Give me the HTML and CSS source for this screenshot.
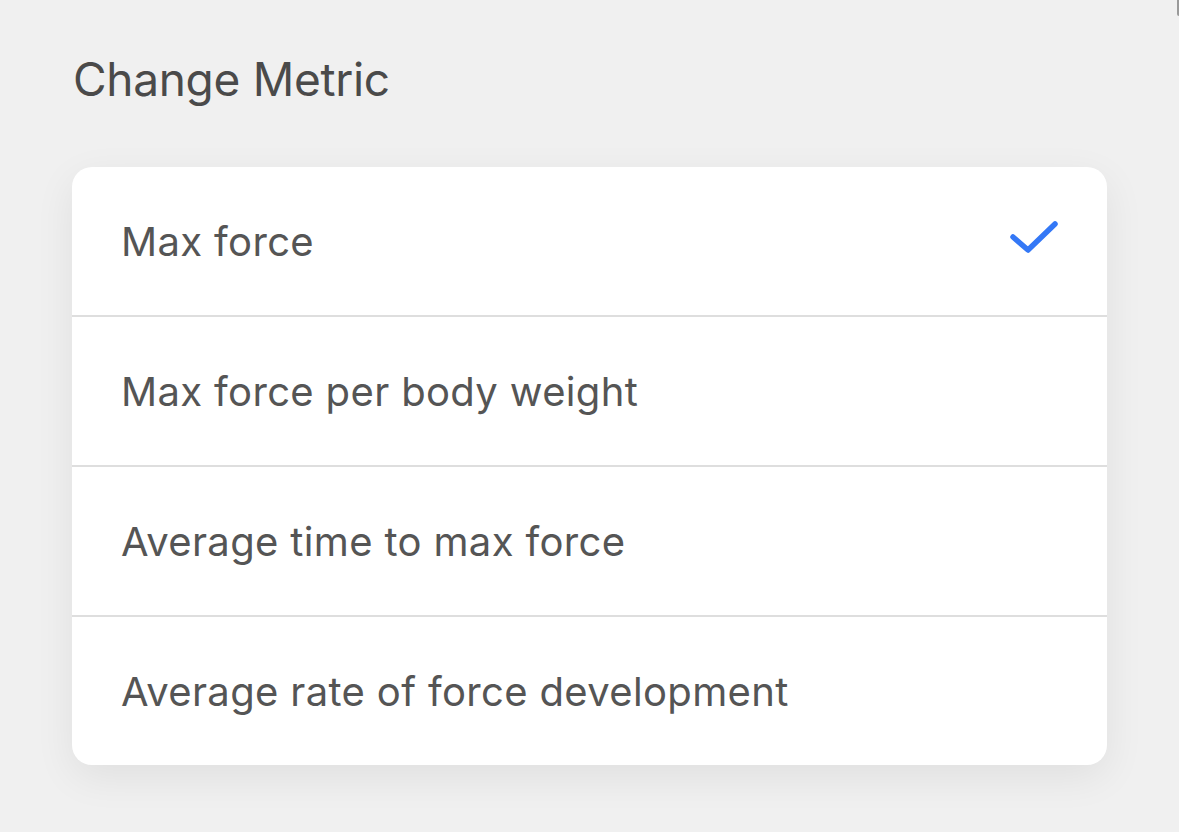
FILE: index.html
```html
<!DOCTYPE html>
<html lang="en">
<head>
<meta charset="utf-8">
<title>Change Metric</title>
<link rel="stylesheet" href="styles.css">
</head>
<body>
<div class="sheet">
  <h1 class="title">Change Metric</h1>
  <ul class="list">
    <li class="row">
      <span class="label">Max force</span>
      <svg class="check" width="50" height="36" viewBox="0 0 50 36" aria-hidden="true">
        <path d="M4 17 L19 30 L46 4" fill="none" stroke="#3478f6" stroke-width="5.5" stroke-linecap="round" stroke-linejoin="round"/>
      </svg>
    </li>
    <li class="row"><span class="label">Max force per body weight</span></li>
    <li class="row"><span class="label">Average time to max force</span></li>
    <li class="row"><span class="label">Average rate of force development</span></li>
  </ul>
</div>
<div class="corner"></div>
</body>
</html>
```
FILE: styles.css
```css
html, body {
  margin: 0;
  padding: 0;
}
body {
  background: #f0f0f0;
  font-family: Inter, "Noto Sans", "Liberation Sans", sans-serif;
  width: 1179px;
  height: 832px;
  overflow: hidden;
  position: relative;
}
.sheet {
  padding: 50px 72px 0 72px;
  display: flex;
  flex-direction: column;
}
.title {
  margin: 0 0 0 1px;
  font-size: 46px;
  font-weight: 400;
  color: #4a4a4a;
  line-height: 58px;
  letter-spacing: -0.3px;
}
.list {
  list-style: none;
  margin: 59px 0 0 0;
  padding: 0;
  background: #ffffff;
  border-radius: 20px;
  box-shadow: 0 12px 40px rgba(0, 0, 0, 0.07);
  width: 1035px;
}
.row {
  height: 148px;
  display: flex;
  align-items: center;
  justify-content: space-between;
  padding: 0 48px 0 49px;
  border-top: 2px solid #dedede;
}
.row:first-child {
  border-top: none;
}
.label {
  font-size: 40px;
  color: #555555;
  letter-spacing: 0.35px;
}
.check {
  display: block;
  margin-top: -6px;
}
.corner {
  position: absolute;
  top: 0;
  right: 0;
  width: 2px;
  height: 16px;
  background: #9a9a9a;
  border-bottom-left-radius: 2px;
}
```
